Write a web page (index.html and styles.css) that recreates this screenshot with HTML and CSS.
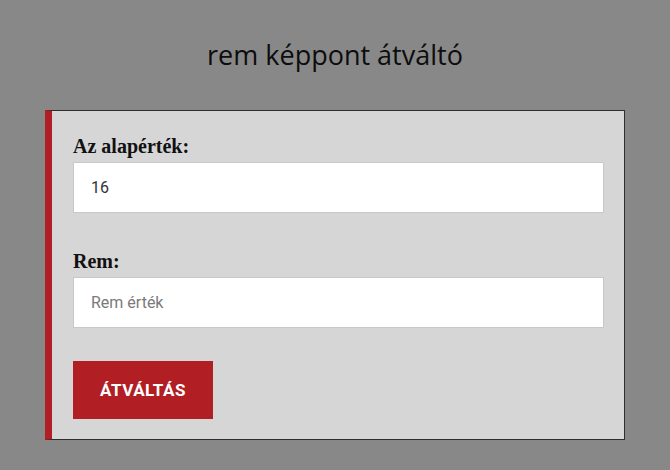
FILE: index.html
```html
<!DOCTYPE html>
<html lang="hu">
<head>
<meta charset="utf-8">
<title>rem képpont átváltó</title>
<link rel="stylesheet" href="styles.css">
</head>
<body>
<h1 class="title">rem képpont átváltó</h1>
<div class="card">
  <div class="field">
    <label class="label" for="base">Az alapérték:</label>
    <input class="input" id="base" type="text" value="16">
  </div>
  <div class="field field-second">
    <label class="label" for="rem">Rem:</label>
    <input class="input" id="rem" type="text" placeholder="Rem érték">
  </div>
  <button class="btn" type="button">ÁTVÁLTÁS</button>
</div>
</body>
</html>
```
FILE: styles.css
```css
html, body {
  margin: 0;
  padding: 0;
}
body {
  background: #888888;
  width: 670px;
  height: 470px;
  overflow: hidden;
}
.title {
  margin: 0;
  padding-top: 38px;
  font-family: "Open Sans", sans-serif;
  font-weight: 400;
  font-size: 27px;
  line-height: 33px;
  color: #0d0d0d;
  text-align: center;
}
.card {
  box-sizing: border-box;
  width: 580px;
  margin: 39px 0 0 45px;
  background: #d6d6d6;
  border: 1px solid #2e2e2e;
  border-left: 7px solid #b11f24;
  padding: 24px 20px 20px 21px;
}
.field {
  display: flex;
  flex-direction: column;
}
.field-second {
  margin-top: 37px;
}
.label {
  font-family: "Liberation Serif", serif;
  font-weight: 700;
  font-size: 20px;
  line-height: 22px;
  color: #111;
  margin-bottom: 5px;
}
.input {
  box-sizing: border-box;
  height: 51px;
  width: 100%;
  margin: 0;
  border: 1px solid #c8c8c8;
  background: #fff;
  padding: 0 17px;
  font-family: Roboto, sans-serif;
  font-size: 16px;
  color: #333;
  outline: none;
}
.input::placeholder {
  color: #7a7a7a;
}
.btn {
  display: block;
  margin-top: 33px;
  width: 140px;
  height: 58px;
  border: none;
  background: #b11f24;
  color: #fff;
  font-family: Roboto, sans-serif;
  font-weight: 700;
  font-size: 17px;
  letter-spacing: 0.5px;
  padding: 0;
}
```
